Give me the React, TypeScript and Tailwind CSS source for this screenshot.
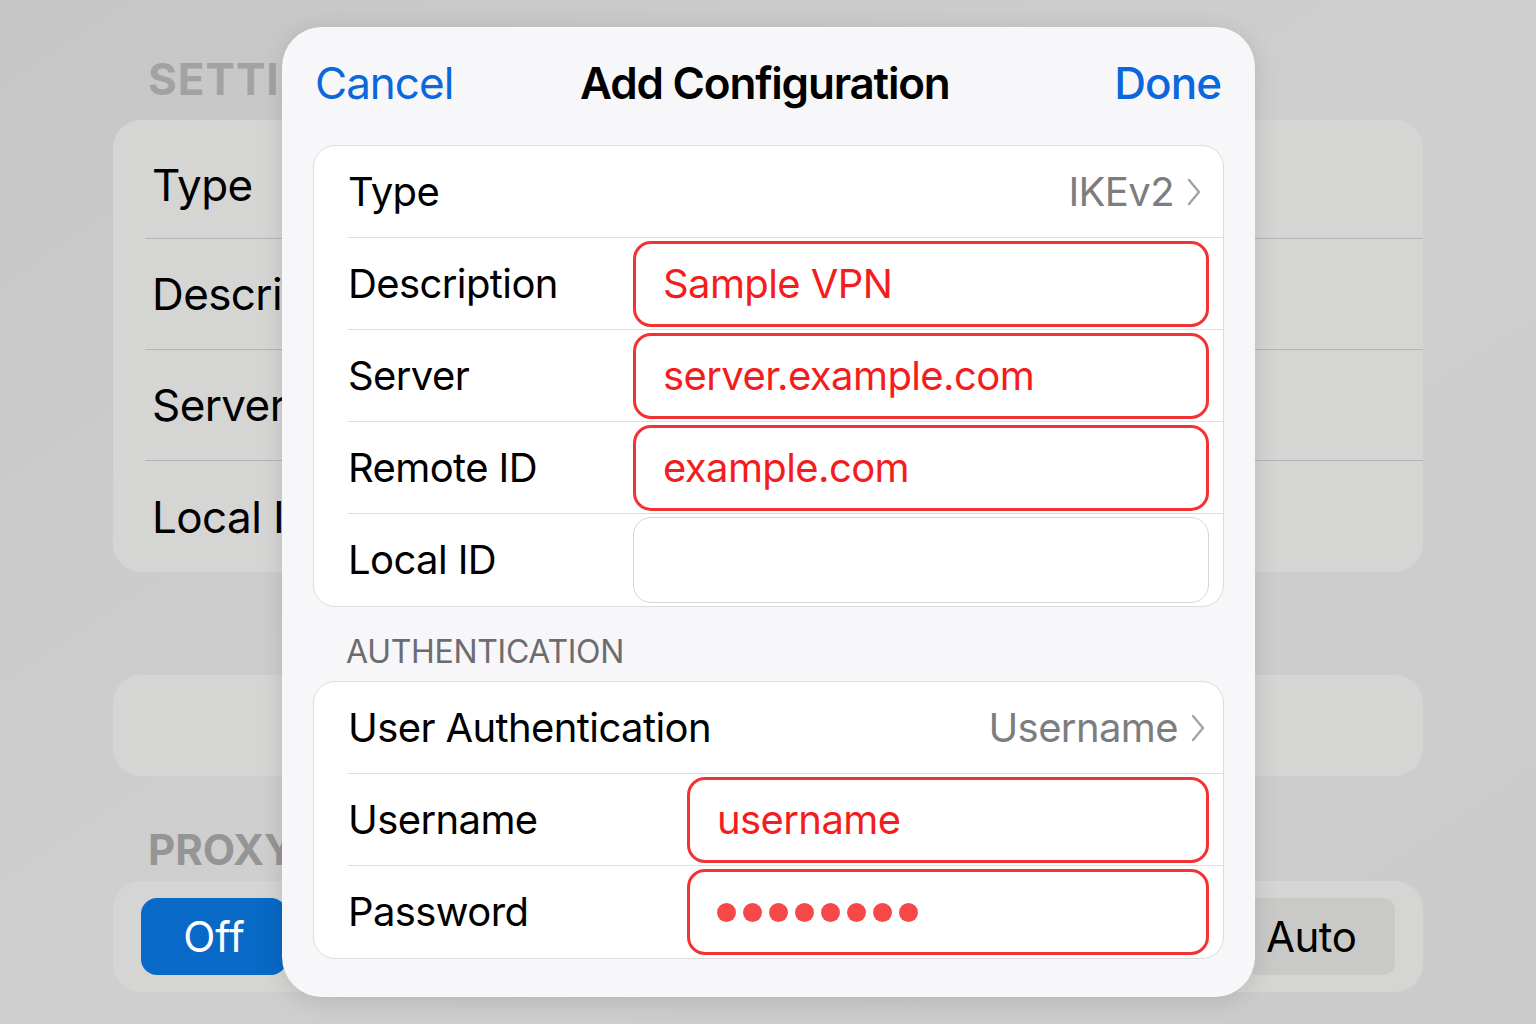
import React from 'react';

const font = { fontFamily: 'Inter, "Noto Sans", sans-serif' };

function Chevron() {
  return (
    <svg width="16" height="30" viewBox="0 0 16 30" fill="none" className="ml-[12px]">
      <path d="M3 3 L13 15 L3 27" stroke="#a3a3a6" strokeWidth="2.4" strokeLinecap="round" strokeLinejoin="round" />
    </svg>
  );
}

// champ de saisie surligné en rouge
function Field({ value, width, red = true, dots = false }: { value?: string; width: string; red?: boolean; dots?: boolean }) {
  return (
    <div
      className={`${width} h-[86px] ml-auto mr-[14px] rounded-[18px] bg-white flex items-center pl-[27px] ${
        red ? 'border-[3px] border-[#f33333]' : 'border border-[#d6d6d8]'
      }`}
    >
      {dots ? (
        <div className="flex gap-[7px]">
          {Array.from({ length: 8 }).map((_, i) => (
            <span key={i} className="w-[19px] h-[19px] rounded-full bg-[#f54848]" />
          ))}
        </div>
      ) : (
        <span className="text-[40px] text-[#f41d1d] tracking-[-0.6px]">{value}</span>
      )}
    </div>
  );
}

function Row({ label, last = false, children }: { label: string; last?: boolean; children?: React.ReactNode }) {
  return (
    <div className={`ml-[34px] h-[92px] flex items-center ${last ? '' : 'border-b border-[#dedee0]'}`}>
      <span className="text-[40px] text-black tracking-[-0.6px]">{label}</span>
      {children}
    </div>
  );
}

function BgRow({ label, first = false, last = false }: { label: string; first?: boolean; last?: boolean }) {
  return (
    <div className={`ml-[32px] ${first ? 'h-[119px] pt-[12px]' : 'h-[111px]'} flex items-center ${last ? '' : 'border-b border-[#b4b4b4]'}`}>
      <span className="pl-[7px] text-[44px] text-black tracking-[-0.6px]">{label}</span>
    </div>
  );
}

export default function App() {
  return (
    <div
      className="relative w-[1536px] h-[1024px] overflow-hidden bg-gradient-to-br from-[#c6c6c6] via-[#cfcfcf] to-[#cbcbcb]"
      style={font}
    >
      {/* page de réglages en arrière-plan */}
      <div className="px-[113px]">
        <div className="h-[120px] flex items-center pl-[35px] pt-[38px]">
          <span className="text-[44px] font-bold text-[#a2a2a2] tracking-[1px]">SETTINGS</span>
        </div>
        <div className="rounded-[28px] bg-[#d5d5d4]">
          <BgRow label="Type" first />
          <BgRow label="Description" />
          <BgRow label="Server" />
          <BgRow label="Local ID" last />
        </div>
        <div className="mt-[103px] h-[101px] rounded-[28px] bg-[#d5d5d4]" />
        <div className="h-[105px] flex items-center pl-[35px] pt-[42px]">
          <span className="text-[42px] font-bold text-[#959595]">PROXY</span>
        </div>
        <div className="h-[111px] rounded-[28px] bg-[#d5d5d4] flex items-center px-[28px]">
          <div className="w-[146px] h-[77px] rounded-[16px] bg-[#0869c6] flex items-center justify-center">
            <span className="text-[42px] text-white">Off</span>
          </div>
          <div className="ml-auto w-[150px] h-[77px] rounded-[12px] bg-[#c9c9c8] flex items-center pl-[21px]">
            <span className="text-[42px] text-black tracking-[-0.5px]">Auto</span>
          </div>
        </div>
      </div>

      {/* fenêtre modale */}
      <div className="absolute left-[282px] top-[27px] w-[973px] h-[970px] rounded-[40px] bg-[#f7f7f9] shadow-[0_4px_24px_rgba(0,0,0,0.12)] px-[31px]">
        <div className="h-[118px] flex items-center justify-between pb-[6px] pl-[2px] pr-[3px]">
          <span className="text-[44px] text-[#0a67dc] tracking-[-1px]">Cancel</span>
          <span className="text-[44px] font-semibold text-black tracking-[-1.2px] -ml-[38px]">Add Configuration</span>
          <span className="text-[44px] font-medium text-[#0a67dc] tracking-[-1px]">Done</span>
        </div>

        <div className="rounded-[22px] bg-white border border-[#dcdcde] overflow-hidden">
          <Row label="Type">
            <span className="ml-auto text-[40px] text-[#7d7d80] tracking-[-0.6px]">IKEv2</span>
            <span className="mr-[21px]"><Chevron /></span>
          </Row>
          <Row label="Description">
            <Field value="Sample VPN" width="w-[576px]" />
          </Row>
          <Row label="Server">
            <Field value="server.example.com" width="w-[576px]" />
          </Row>
          <Row label="Remote ID">
            <Field value="example.com" width="w-[576px]" />
          </Row>
          <Row label="Local ID" last>
            <Field width="w-[576px]" red={false} />
          </Row>
        </div>

        <div className="h-[74px] flex items-end pb-[5px] pl-[33px]">
          <span className="text-[32px] text-[#6c6c70] tracking-[-0.3px]">AUTHENTICATION</span>
        </div>

        <div className="rounded-[22px] bg-white border border-[#dcdcde] overflow-hidden">
          <Row label="User Authentication">
            <span className="ml-auto text-[40px] text-[#7d7d80] tracking-[-0.6px]">Username</span>
            <span className="mr-[17px]"><Chevron /></span>
          </Row>
          <Row label="Username">
            <Field value="username" width="w-[522px]" />
          </Row>
          <Row label="Password" last>
            <Field width="w-[522px]" dots />
          </Row>
        </div>
      </div>
    </div>
  );
}
